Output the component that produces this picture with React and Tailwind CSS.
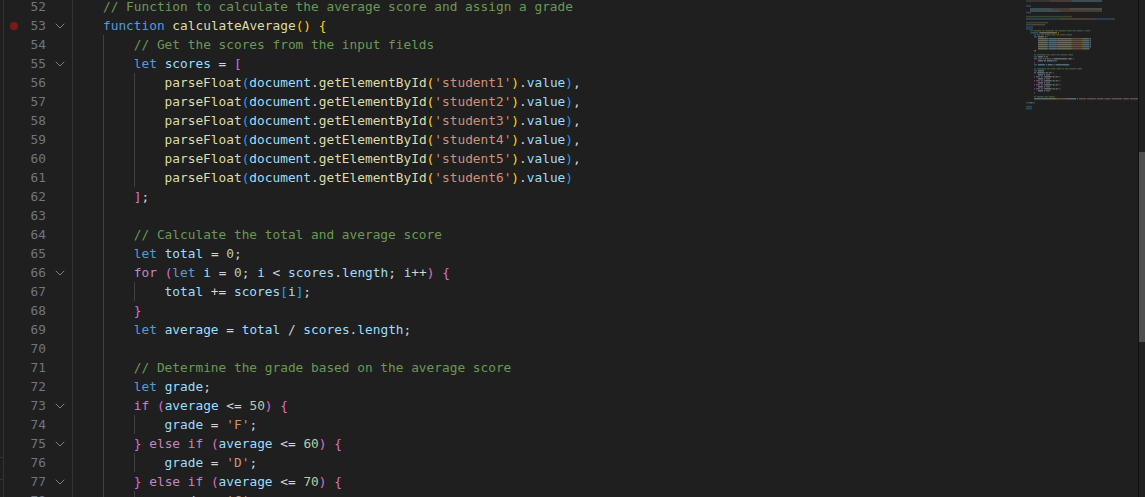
import { ChevronDown } from "lucide-react";

// token colours, text class and minimap fill
const textClass = {
  c: "text-[#6a9955]",
  k: "text-[#569cd6]",
  p: "text-[#c586c0]",
  f: "text-[#dcdcaa]",
  v: "text-[#9cdcfe]",
  s: "text-[#ce9178]",
  n: "text-[#b5cea8]",
  t: "text-[#d4d4d4]",
  g: "text-[#ffd700]",
  m: "text-[#da70d6]",
  b: "text-[#179fff]",
};

const fill = {
  c: "#6a9955",
  k: "#569cd6",
  p: "#c586c0",
  f: "#dcdcaa",
  v: "#9cdcfe",
  s: "#ce9178",
  n: "#b5cea8",
  t: "#d4d4d4",
  g: "#ffd700",
  m: "#da70d6",
  b: "#179fff",
};

function studentLine(n, last) {
  return [
    ["f", "parseFloat"],
    ["b", "("],
    ["v", "document"],
    ["t", "."],
    ["f", "getElementById"],
    ["g", "("],
    ["s", `'student${n}'`],
    ["g", ")"],
    ["t", "."],
    ["v", "value"],
    ["b", ")"],
    ["t", last ? "" : ","],
  ];
}

function elseIf(value) {
  return [
    ["m", "}"],
    ["t", " "],
    ["p", "else if"],
    ["t", " "],
    ["m", "("],
    ["v", "average"],
    ["t", " <= "],
    ["n", value],
    ["m", ")"],
    ["t", " "],
    ["m", "{"],
  ];
}

function gradeLine(letter) {
  return [
    ["v", "grade"],
    ["t", " = "],
    ["s", `'${letter}'`],
    ["t", ";"],
  ];
}

const lines = [
  { n: 52, level: 0, t: [["c", "// Function to calculate the average score and assign a grade"]] },
  { n: 53, level: 0, fold: true, dot: true, t: [["k", "function"], ["t", " "], ["f", "calculateAverage"], ["g", "() {"]] },
  { n: 54, level: 1, t: [["c", "// Get the scores from the input fields"]] },
  { n: 55, level: 1, fold: true, t: [["k", "let"], ["t", " "], ["v", "scores"], ["t", " = "], ["m", "["]] },
  { n: 56, level: 2, t: studentLine(1) },
  { n: 57, level: 2, t: studentLine(2) },
  { n: 58, level: 2, t: studentLine(3) },
  { n: 59, level: 2, t: studentLine(4) },
  { n: 60, level: 2, t: studentLine(5) },
  { n: 61, level: 2, t: studentLine(6, true) },
  { n: 62, level: 1, t: [["m", "]"], ["t", ";"]] },
  { n: 63, level: 1, t: [] },
  { n: 64, level: 1, t: [["c", "// Calculate the total and average score"]] },
  { n: 65, level: 1, t: [["k", "let"], ["t", " "], ["v", "total"], ["t", " = "], ["n", "0"], ["t", ";"]] },
  {
    n: 66,
    level: 1,
    fold: true,
    t: [
      ["p", "for"],
      ["t", " "],
      ["m", "("],
      ["k", "let"],
      ["t", " "],
      ["v", "i"],
      ["t", " = "],
      ["n", "0"],
      ["t", "; "],
      ["v", "i"],
      ["t", " < "],
      ["v", "scores"],
      ["t", "."],
      ["v", "length"],
      ["t", "; "],
      ["v", "i"],
      ["t", "++"],
      ["m", ")"],
      ["t", " "],
      ["m", "{"],
    ],
  },
  { n: 67, level: 2, t: [["v", "total"], ["t", " += "], ["v", "scores"], ["b", "["], ["v", "i"], ["b", "]"], ["t", ";"]] },
  { n: 68, level: 1, t: [["m", "}"]] },
  {
    n: 69,
    level: 1,
    t: [["k", "let"], ["t", " "], ["v", "average"], ["t", " = "], ["v", "total"], ["t", " / "], ["v", "scores"], ["t", "."], ["v", "length"], ["t", ";"]],
  },
  { n: 70, level: 1, t: [] },
  { n: 71, level: 1, t: [["c", "// Determine the grade based on the average score"]] },
  { n: 72, level: 1, t: [["k", "let"], ["t", " "], ["v", "grade"], ["t", ";"]] },
  {
    n: 73,
    level: 1,
    fold: true,
    t: [["p", "if"], ["t", " "], ["m", "("], ["v", "average"], ["t", " <= "], ["n", "50"], ["m", ")"], ["t", " "], ["m", "{"]],
  },
  { n: 74, level: 2, t: gradeLine("F") },
  { n: 75, level: 1, fold: true, t: elseIf("60") },
  { n: 76, level: 2, t: gradeLine("D") },
  { n: 77, level: 1, fold: true, t: elseIf("70") },
  { n: 78, level: 2, t: gradeLine("C") },
];

// the rest of the file only shows up in the minimap
const belowFold = [
  { n: 79, level: 1, t: elseIf("80") },
  { n: 80, level: 2, t: gradeLine("B") },
  { n: 81, level: 1, t: elseIf("90") },
  { n: 82, level: 2, t: gradeLine("A") },
  { n: 83, level: 1, t: [["m", "}"]] },
  { n: 85, level: 1, t: [["c", "// Display the result"]] },
  {
    n: 86,
    level: 1,
    t: [
      ["v", "document"],
      ["t", "."],
      ["f", "getElementById"],
      ["g", "("],
      ["s", "'result'"],
      ["g", ")"],
      ["t", "."],
      ["v", "innerText"],
      ["t", " = "],
      ["s", "`Total: ${total}, Average Score: ${average}, Grade: ${grade}, Result: ${res}`"],
    ],
  },
  { n: 88, level: 0, t: [["g", "}"]] },
];

// rough blocks for the html above line 52: [y, x1, x2, colour]
const minimapTop = [
  [1, 21, 45, "#808080"],
  [1, 45, 67, "#ce9178"],
  [1, 67, 97, "#9cdcfe"],
  [6, 21, 26, "#569cd6"],
  [9, 25, 47, "#9cdcfe"],
  [9, 47, 65, "#ce9178"],
  [9, 65, 97, "#d4d4d4"],
  [11, 25, 55, "#9cdcfe"],
  [11, 55, 97, "#ce9178"],
  [12.6, 21, 26, "#569cd6"],
  [16.6, 21, 67, "#6a9955"],
  [19, 21, 55, "#569cd6"],
  [19, 55, 90, "#ce9178"],
  [19, 90, 110, "#569cd6"],
  [22.6, 21, 43, "#6a9955"],
  [24.6, 21, 27, "#569cd6"],
  [24.6, 27, 40, "#ce9178"],
  [27, 21, 28, "#569cd6"],
  [29, 21, 28, "#569cd6"],
];

const minimapBottom = [
  [102.7, 21, 30, "#569cd6"],
  [106.6, 21, 27, "#569cd6"],
  [108.6, 21, 27, "#569cd6"],
];

const minimapX = [25.5, 29, 33];

function Minimap() {
  const rects = [];
  [...lines, ...belowFold].forEach((line) => {
    let col = 0;
    line.t.forEach(([kind, text]) => {
      for (const word of text.matchAll(/\S+/g)) {
        rects.push({
          x: minimapX[line.level] + (col + word.index) * 0.98,
          y: 30 + (line.n - 52) * 2,
          w: word[0].length * 0.98,
          color: fill[kind],
        });
      }
      col += text.length;
    });
  });

  return (
    <svg width="114" height="497" viewBox="1024 0 114 497" className="shrink-0">
      <g transform="translate(1005 0)">
        {minimapTop.concat(minimapBottom).map(([y, x1, x2, color], i) => (
          <rect key={i} x={x1} y={y - 0.75} width={x2 - x1} height="1.5" fill={color} opacity="0.32" />
        ))}
        {rects.map((r, i) => (
          <rect key={i} x={r.x} y={r.y} width={r.w} height="1.5" fill={r.color} opacity="0.4" />
        ))}
      </g>
    </svg>
  );
}

function CodeLine({ line }) {
  return (
    <div className="flex h-[19px] shrink-0 items-center">
      {/* Gutter */}
      <div className="flex h-[19px] w-[69px] shrink-0 items-center border-r border-[#333333]">
        <div className="flex w-[20px] justify-center">
          {line.dot && <div className="h-[8px] w-[8px] rounded-full bg-[#7d1a14]" />}
        </div>
        <div className="w-[22px] text-right text-[#6e7681]">{line.n}</div>
        <div className="ml-[6px] w-[16px]">
          {line.fold && <ChevronDown size={16} strokeWidth={1.3} className="text-[#8c8c8c]" />}
        </div>
      </div>

      {/* Code */}
      <div className="flex h-[19px] items-center whitespace-pre pl-[30px]">
        {Array.from({ length: line.level }, (_, i) => (
          <span key={i} className="inline-block h-[19px] w-[30.8px] border-l border-[#404040]" />
        ))}
        <span>
          {line.t.map(([kind, text], i) => (
            <span key={i} className={textClass[kind]}>
              {text}
            </span>
          ))}
        </span>
      </div>
    </div>
  );
}

export default function App() {
  return (
    <div className="flex h-[497px] overflow-hidden bg-[#1f1f1f] font-['DejaVu_Sans_Mono',monospace] text-[12.8px]">
      {/* Left edge */}
      <div className="w-[4px] shrink-0 border-r border-[#333333]">
        <div className="mt-[457px] h-px bg-[#333333]" />
        <div className="mt-[21px] h-px bg-[#333333]" />
      </div>

      {/* Editor */}
      <div className="-mt-[3px] flex w-[1020px] shrink-0 flex-col">
        {lines.map((line) => (
          <CodeLine key={line.n} line={line} />
        ))}
      </div>

      <Minimap />

      {/* Scrollbar */}
      <div className="w-[7px] shrink-0 border-l border-[#111111] bg-[#212121]">
        <div className="mt-[152px] h-[190px] bg-[#4f4f4f]" />
      </div>
    </div>
  );
}
